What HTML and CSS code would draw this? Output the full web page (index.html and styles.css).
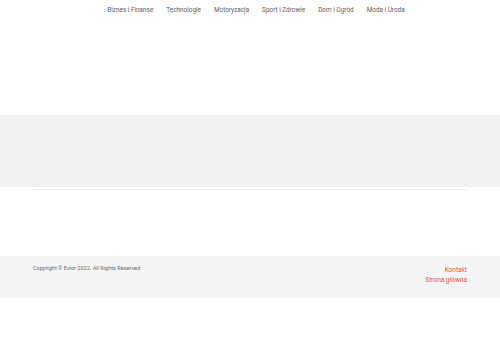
FILE: index.html
```html
<!DOCTYPE html>
<html lang="pl">
<head>
    <meta charset="UTF-8" />
    <title>Evior</title>
    <link rel="stylesheet" href="styles.css">
</head>
<body>
    <header class="top">
        <nav class="menu">
            <a href="#">Biznes i Finanse</a>
            <a href="#">Technologie</a>
            <a href="#">Motoryzacja</a>
            <a href="#">Sport i Zdrowie</a>
            <a href="#">Dom i Ogród</a>
            <a href="#">Moda i Uroda</a>
        </nav>
    </header>
    <section class="band"></section>
    <div class="wrap">
        <div class="rule"></div>
    </div>
    <footer class="foot">
        <div class="wrap foot-inner">
            <p class="copy">Copyright © Evior 2022. All Rights Reserved</p>
            <div class="foot-mid"><span></span><span></span></div>
            <div class="foot-links">
                <a href="#">Kontakt</a>
                <a href="#">Strona główna</a>
            </div>
        </div>
    </footer>
</body>
</html>
```

FILE: styles.css
```css
*,
*:before,
*:after{
    padding: 0;
    margin: 0;
    box-sizing: border-box;
}
body{
    background-color: #ffffff;
    font-family: Roboto, "Liberation Sans", sans-serif;
}
a{
    text-decoration: none;
}
.top{
    height: 115px;
}
.menu{
    display: flex;
    justify-content: center;
    gap: 13px;
    padding-top: 5px;
    padding-left: 12px;
}
.menu a{
    font-size: 6.4px;
    line-height: 10px;
    color: #606060;
}
.band{
    height: 72px;
    background-color: #f2f2f2;
}
.wrap{
    width: 434px;
    margin: 0 auto;
}
.rule{
    margin-top: 2px;
    height: 1px;
    background-color: #ededed;
}
.foot{
    margin-top: 66px;
    height: 42px;
    background-color: #f5f5f5;
}
.foot-inner{
    display: flex;
    justify-content: space-between;
    padding-top: 8px;
}
.copy{
    font-size: 5.55px;
    line-height: 8px;
    color: #6a6a6a;
    width: 150px;
}
.foot-mid{
    display: flex;
    flex-direction: column;
    gap: 8px;
    padding-top: 5px;
}
.foot-mid span{
    width: 1px;
    height: 1px;
    background-color: #e4e4e4;
}
.foot-links{
    width: 150px;
    display: flex;
    flex-direction: column;
    align-items: flex-end;
    padding-top: 1px;
}
.foot-links a{
    font-size: 6.5px;
    line-height: 10px;
    color: #e85a30;
}
```
